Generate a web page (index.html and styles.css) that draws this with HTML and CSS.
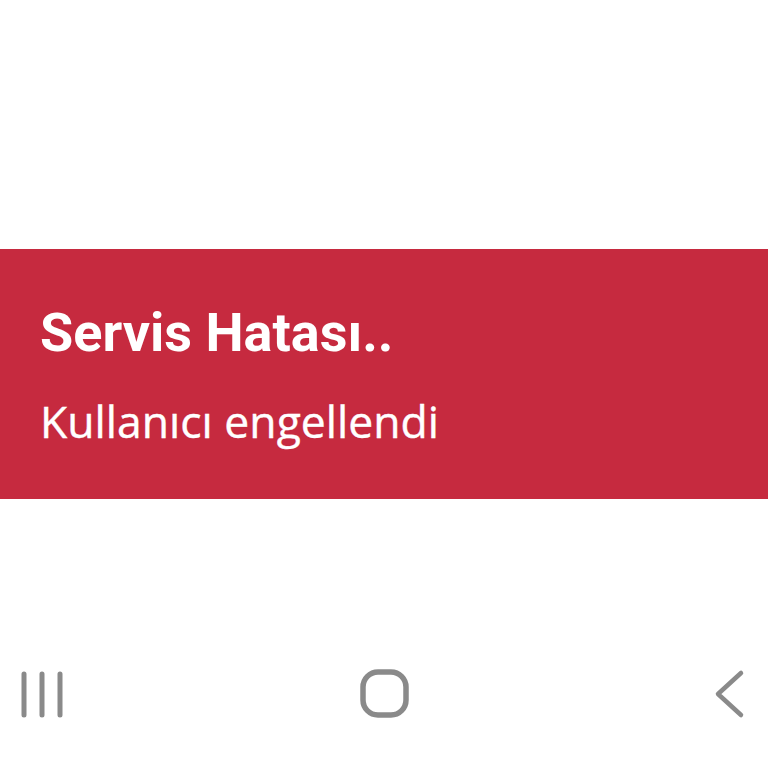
FILE: index.html
```html
<!DOCTYPE html>
<html lang="tr">
<head>
<meta charset="utf-8">
<link rel="stylesheet" href="styles.css">
</head>
<body>
<div class="screen">
  <div class="top"></div>
  <div class="banner">
    <div class="title">Servis Hatası..</div>
    <div class="msg">Kullanıcı engellendi</div>
  </div>
  <div class="gap"></div>
  <nav class="navbar">
    <svg class="ic recents" width="46" height="48" viewBox="0 0 46 48"><path d="M5 4v41M23 4v41M41 4v41" stroke="#8a8a8a" stroke-width="5" stroke-linecap="round" fill="none"/></svg>
    <svg class="ic home" width="52" height="52" viewBox="0 0 52 52"><rect x="4" y="4" width="43" height="43" rx="15" ry="15" stroke="#8a8a8a" stroke-width="5.5" fill="none"/></svg>
    <svg class="ic back" width="34" height="50" viewBox="0 0 34 50"><path d="M29 4L6 25l23 21" stroke="#8a8a8a" stroke-width="4.5" stroke-linecap="round" stroke-linejoin="round" fill="none"/></svg>
  </nav>
</div>
</body>
</html>
```
FILE: styles.css
```css
html, body {
  margin: 0;
  padding: 0;
  background: #fff;
}
.screen {
  width: 768px;
  height: 768px;
  display: flex;
  flex-direction: column;
  font-family: Roboto, "Liberation Sans", sans-serif;
}
.top {
  height: 249px;
  flex: none;
}
.banner {
  height: 250px;
  flex: none;
  box-sizing: border-box;
  background: #c62a3f;
  color: #fff;
  padding: 52px 40px 0 40px;
  display: flex;
  flex-direction: column;
}
.title {
  font-weight: 700;
  font-size: 54px;
  line-height: 64px;
}
.msg {
  font-family: "Open Sans", Roboto, sans-serif;
  font-weight: 400;
  font-size: 44.5px;
  line-height: 50px;
  margin-top: 31px;
  -webkit-text-stroke: 0.4px #fff;
}
.gap {
  height: 169px;
  flex: none;
}
.navbar {
  display: grid;
  grid-template-columns: 1fr auto 1fr;
  align-items: center;
  padding: 0 22px 0 19px;
  height: 52px;
}
.recents {
  justify-self: start;
}
.home {
  margin-left: 4px;
}
.back {
  justify-self: end;
}
```
